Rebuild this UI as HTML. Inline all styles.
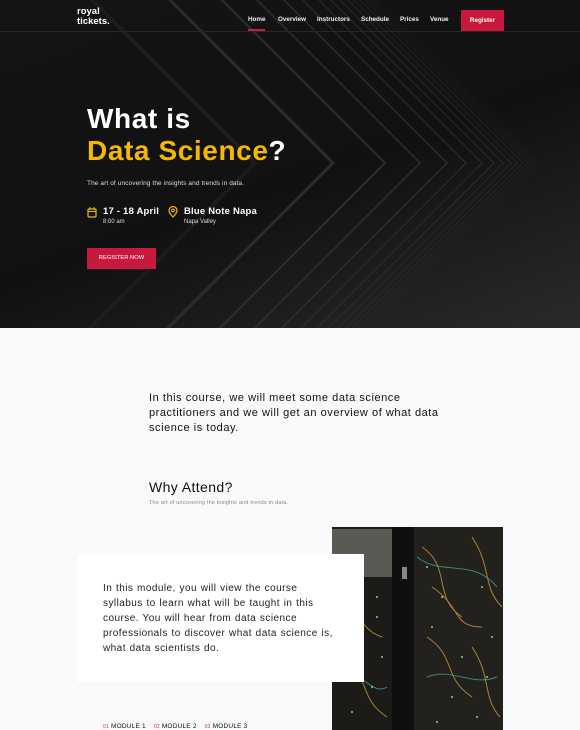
<!DOCTYPE html>
<html><head><meta charset="utf-8"><style>
*{margin:0;padding:0;box-sizing:border-box}
body{width:580px;height:730px;overflow:hidden;background:#f8f9fb;font-family:"Liberation Sans",sans-serif;position:relative}
.hero{position:absolute;left:0;top:0;width:580px;height:328px;background:linear-gradient(160deg,#141416 0%,#111113 55%,#2a2a2c 100%);overflow:hidden}
.abs{position:absolute}
.nav a{position:absolute;top:16px;font-size:6.3px;color:#eee;white-space:nowrap;font-weight:bold}
</style></head><body>
<div class="hero">
<svg class="abs" style="left:0;top:0" width="580" height="328">
<g fill="none">
<polyline points="55,-37 255,163 55,363" stroke="#1c1c1e" stroke-width="4"/>
<polyline points="133,-37 333,163 133,363" stroke="#2c2c2e" stroke-width="3"/>
<polyline points="185,-37 385,163 185,363" stroke="#2e2e30" stroke-width="2"/>
<polyline points="220,-37 420,163 220,363" stroke="#353537" stroke-width="1.2"/>
<polyline points="247,-37 447,163 247,363" stroke="#353537" stroke-width="1"/>
<polyline points="266,-37 466,163 266,363" stroke="#343436" stroke-width=".9"/>
<polyline points="282,-37 482,163 282,363" stroke="#323234" stroke-width=".8"/>
<polyline points="294,-37 494,163 294,363" stroke="#323234" stroke-width=".8"/>
<polyline points="303,-37 503,163 303,363" stroke="#303032" stroke-width=".7"/>
<polyline points="311,-37 511,163 311,363" stroke="#303032" stroke-width=".7"/>
<polyline points="317,-37 517,163 317,363" stroke="#2e2e30" stroke-width=".6"/>
<polyline points="323,-37 523,163 323,363" stroke="#2e2e30" stroke-width=".6"/>
<polyline points="328,-37 528,163 328,363" stroke="#2c2c2e" stroke-width=".5"/>
<polyline points="332,-37 532,163 332,363" stroke="#2a2a2c" stroke-width=".5"/>
<polyline points="336,-37 536,163 336,363" stroke="#29292b" stroke-width=".5"/>
<polyline points="340,-37 540,163 340,363" stroke="#262628" stroke-width=".5"/>
</g>
<line x1="0" y1="31.5" x2="580" y2="31.5" stroke="#262628" stroke-width="1"/>
</svg>
<div class="abs" style="left:77px;top:7px;color:#fff;font-weight:bold;font-size:9.5px;line-height:9.5px">royal<br>tickets.</div>
<div class="nav">
<a style="left:248px">Home</a><a style="left:278px">Overview</a><a style="left:317px">Instructors</a><a style="left:361px">Schedule</a><a style="left:400px">Prices</a><a style="left:430px">Venue</a>
</div>
<div class="abs" style="left:248px;top:29px;width:17px;height:2px;background:#c8203f"></div>
<div class="abs" style="left:461px;top:10px;width:43px;height:21px;background:#c8193d;color:#fff;font-size:6.3px;text-align:center;line-height:21px;font-weight:bold">Register</div>
<div class="abs" style="left:87px;top:103px;color:#fff;font-size:28px;line-height:32px;letter-spacing:.6px;font-weight:bold">What is<br><span style="color:#f5b800">Data Science</span>?</div>
<div class="abs" style="left:87px;top:180px;color:#ddd;font-size:6.5px;letter-spacing:.1px">The art of uncovering the insights and trends in data.</div>
<svg class="abs" style="left:87px;top:207px" width="10" height="11"><rect x="1" y="2" width="8" height="8" rx="1" fill="none" stroke="#f5b800" stroke-width="1.2"/><line x1="1" y1="4.5" x2="9" y2="4.5" stroke="#f5b800"/><line x1="3" y1="0" x2="3" y2="3" stroke="#f5b800"/><line x1="7" y1="0" x2="7" y2="3" stroke="#f5b800"/></svg>
<div class="abs" style="left:103px;top:206px;color:#fff;font-size:9.5px;letter-spacing:.2px;font-weight:bold">17 - 18 April</div>
<div class="abs" style="left:103px;top:219px;color:#ddd;font-size:6px">8:00 am</div>
<svg class="abs" style="left:168px;top:206px" width="10" height="12"><path d="M5 11C2 8 1 6 1 4.5A4 4 0 0 1 9 4.5C9 6 8 8 5 11Z" fill="none" stroke="#f5b800" stroke-width="1.2"/><circle cx="5" cy="4.5" r="1.4" fill="none" stroke="#f5b800"/></svg>
<div class="abs" style="left:184px;top:206px;color:#fff;font-size:9.5px;letter-spacing:.2px;font-weight:bold">Blue Note Napa</div>
<div class="abs" style="left:184px;top:219px;color:#ddd;font-size:6px">Napa Valley</div>
<div class="abs" style="left:87px;top:248px;width:69px;height:21px;background:#c8193d;color:#fff;font-size:5.8px;text-align:center;line-height:21px">REGISTER NOW</div>
</div>
<div class="abs" style="left:149px;top:391px;width:300px;color:#111;font-size:11px;line-height:15px;letter-spacing:.55px">In this course, we will meet some data science practitioners and we will get an overview of what data science is today.</div>
<div class="abs" style="left:149px;top:479px;color:#111;font-size:14px;letter-spacing:.4px">Why Attend?</div>
<div class="abs" style="left:149px;top:500px;color:#888;font-size:5.5px;letter-spacing:.2px">The art of uncovering the insights and trends in data.</div>
<svg class="abs" style="left:332px;top:527px" width="171" height="203">
<rect width="171" height="203" fill="#1c1b18"/>
<rect x="0" y="2" width="60" height="48" fill="#5a5a55"/>
<rect x="60" y="0" width="22" height="203" fill="#0f0f0f"/>
<rect x="82" y="0" width="89" height="203" fill="#22211d"/>
<rect x="70" y="40" width="5" height="12" fill="#888"/>
<g fill="none" stroke="#c89040" stroke-width="1" opacity=".85">
<path d="M90 20C120 40 100 70 130 90"/><path d="M140 10C160 40 150 60 170 80"/><path d="M5 60C30 70 20 100 50 110"/><path d="M95 110C125 130 110 150 140 170"/><path d="M10 130C40 150 25 170 55 190"/><path d="M140 120C160 150 150 170 168 190"/><path d="M100 60C130 80 120 100 150 100"/>
</g>
<g fill="none" stroke="#4a9a9a" stroke-width="1" opacity=".8">
<path d="M85 30C110 50 140 30 165 60"/><path d="M5 150C30 140 40 170 55 160"/><path d="M95 150C120 140 140 160 165 150"/>
</g>
<g fill="#7ce05a">
<circle cx="45" cy="70" r="1"/><circle cx="45" cy="90" r="1"/><circle cx="30" cy="110" r="1"/><circle cx="50" cy="130" r="1"/><circle cx="40" cy="160" r="1"/><circle cx="20" cy="185" r="1"/><circle cx="95" cy="40" r="1"/><circle cx="110" cy="70" r="1"/><circle cx="100" cy="100" r="1"/><circle cx="130" cy="130" r="1"/><circle cx="150" cy="60" r="1"/><circle cx="160" cy="110" r="1"/><circle cx="120" cy="170" r="1"/><circle cx="145" cy="190" r="1"/><circle cx="105" cy="195" r="1"/><circle cx="155" cy="150" r="1"/>
</g>
</svg>
<div class="abs" style="left:77px;top:554px;width:287px;height:128px;background:#fff"></div>
<div class="abs" style="left:103px;top:581px;width:230px;color:#222;font-size:10px;line-height:15px;letter-spacing:.45px;word-spacing:.5px">In this module, you will view the course syllabus to learn what will be taught in this course. You will hear from data science professionals to discover what data science is, what data scientists do.</div>
<div class="abs" style="left:103px;top:723px;font-size:6.5px;color:#111;white-space:nowrap;letter-spacing:.2px"><span style="color:#d0304f;font-size:5px">01</span> MODULE 1 &nbsp;&nbsp;&nbsp;<span style="color:#d0304f;font-size:5px">02</span> MODULE 2 &nbsp;&nbsp;&nbsp;<span style="color:#d0304f;font-size:5px">03</span> MODULE 3</div>
</body></html>
